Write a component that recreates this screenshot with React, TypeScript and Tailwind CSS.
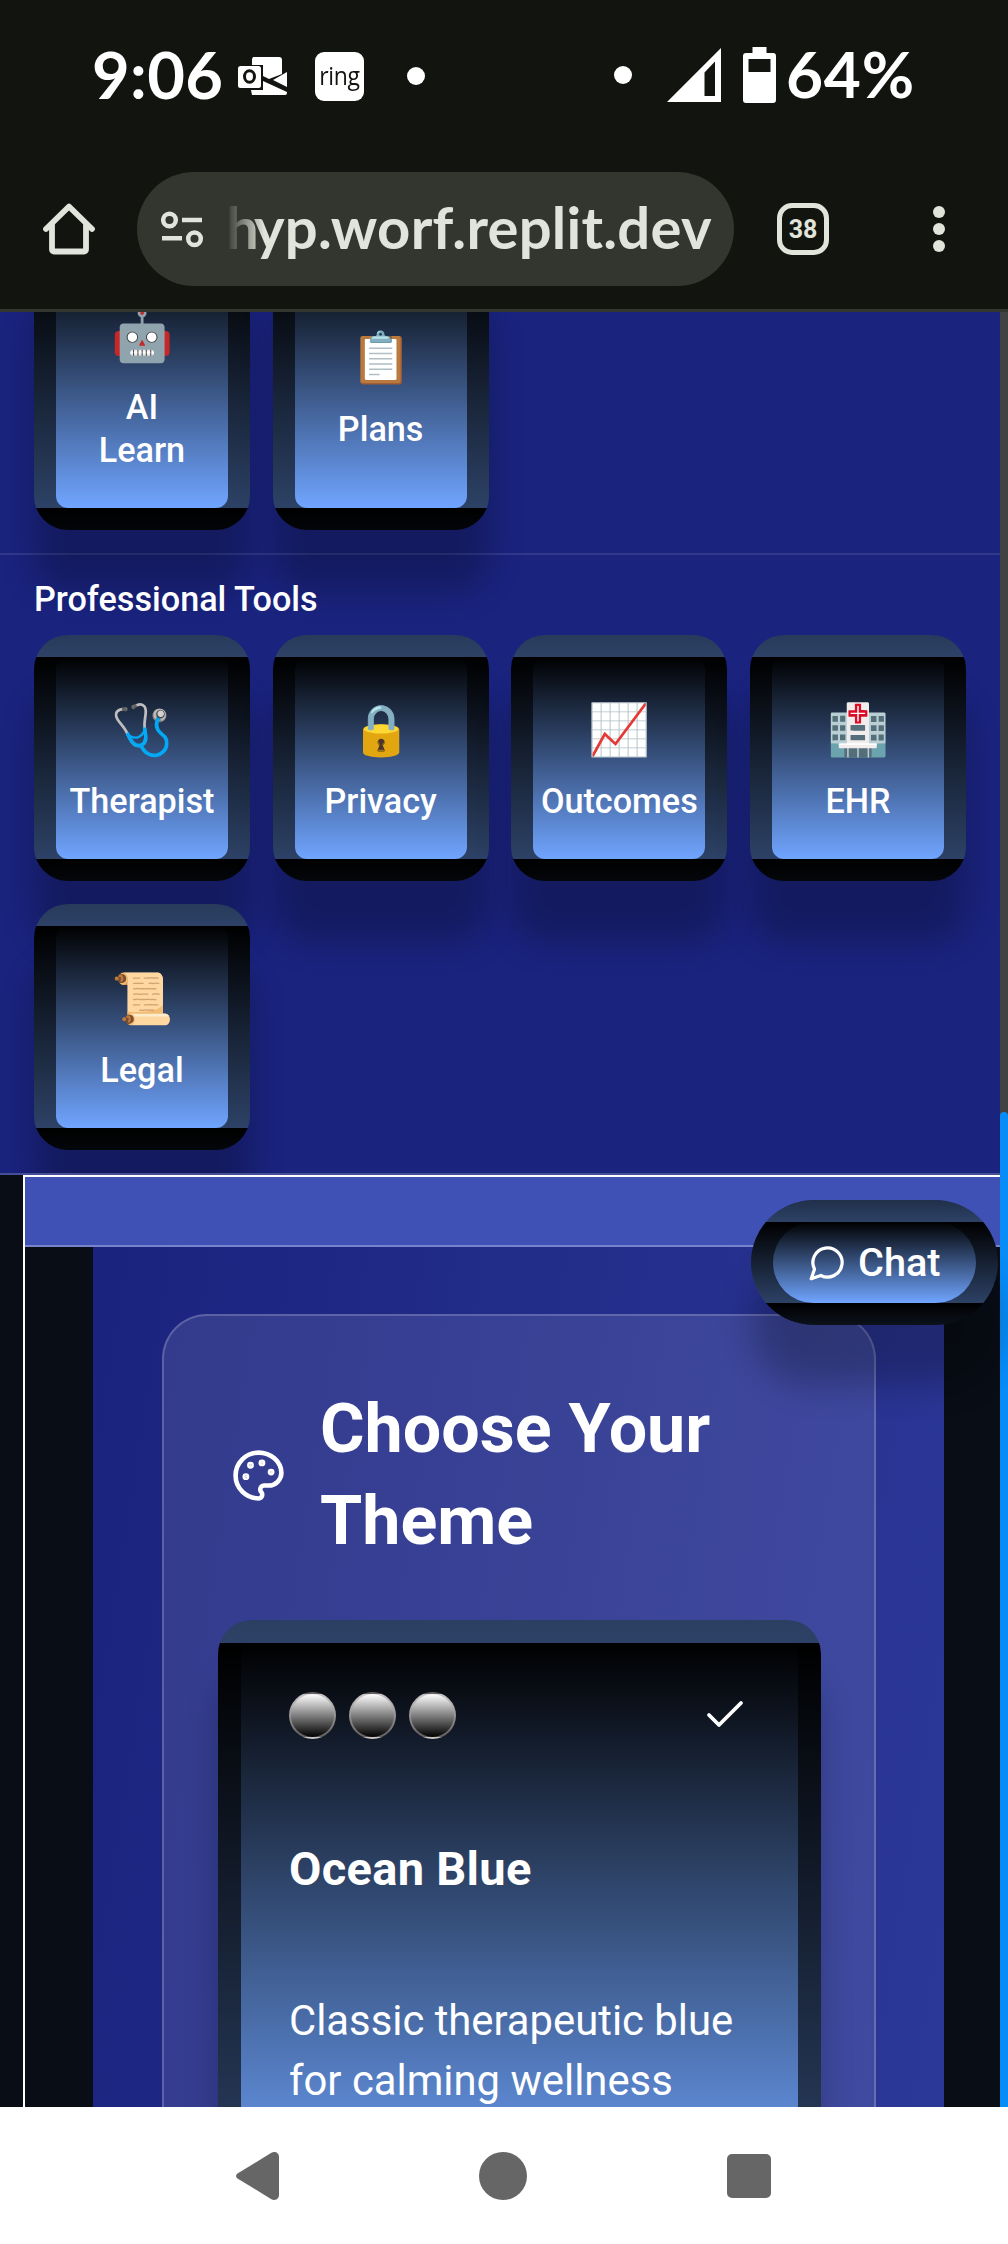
import React from "react";

type Tool = { icon: string; label: string };

const mainTools: Tool[] = [
  { icon: "🤖", label: "AI Learn" },
  { icon: "📋", label: "Plans" },
];

const professionalTools: Tool[] = [
  { icon: "🩺", label: "Therapist" },
  { icon: "🔒", label: "Privacy" },
  { icon: "📈", label: "Outcomes" },
  { icon: "🏥", label: "EHR" },
  { icon: "📜", label: "Legal" },
];

function StatusBar() {
  return (
    <div className="flex h-[150px] items-start text-white">
      <div className="ml-[92px] mt-[36px] w-[133px] whitespace-nowrap font-['Lato'] text-[65px] font-bold leading-[76px] tracking-[0.4px]">9:06</div>
      <svg className="ml-[13px] mt-[57px] h-[38px] w-[49px]" viewBox="0 0 49 38" fill="none">
        <path d="M15 0h26a3 3 0 0 1 3 3v14L31 22l-6-3V8H14V2z" fill="#fff" />
        <path d="M49 15v15L35 23zM13 33h12v-9l24 11v1a2 2 0 0 1-2 2H14z" fill="#fff" />
        <rect x="0" y="9" width="23" height="22" rx="2.500" fill="#fff" />
        <ellipse cx="11.500" cy="19.500" rx="5" ry="5.700" stroke="#12140f" strokeWidth="3" />
      </svg>
      <div className="ml-[28px] mt-[52px] flex h-[49px] w-[49px] items-center justify-center rounded-[9px] bg-white pb-[2px] text-[#12140f]">
        <span className="scale-y-110 font-['Open_Sans'] text-[23px] font-medium leading-none tracking-[-0.3px]">ring</span>
      </div>
      <div className="ml-[43px] mt-[67px] h-[18px] w-[18px] rounded-full bg-white" />
      <div className="ml-[189px] mt-[66px] h-[18px] w-[18px] rounded-full bg-white" />
      <svg className="ml-[35px] mt-[48px] h-[54px] w-[54px]" viewBox="0 0 54 54">
        <path fillRule="evenodd" d="M54 0v54H0zM48 13.500 37.500 24.500V48H48z" fill="#fff" />
      </svg>
      <svg className="ml-[22px] mt-[47px] h-[56px] w-[33px]" viewBox="0 0 33 56">
        <path fillRule="evenodd" d="M9.500 0h14v6H30a3 3 0 0 1 3 3v44a3 3 0 0 1-3 3H3a3 3 0 0 1-3-3V9a3 3 0 0 1 3-3h6.500zM5.500 12v13h22V12z" fill="#fff" />
      </svg>
      <div className="ml-[10px] mt-[36px] whitespace-nowrap font-['Lato'] text-[64px] font-bold leading-[76px] tracking-[0.7px]">64%</div>
    </div>
  );
}

function Toolbar() {
  return (
    <div className="flex h-[162px] items-start border-b-[3px] border-[#33362f] text-[#e1e4da]">
      <svg className="ml-[43px] mt-[53px] h-[52px] w-[52px]" viewBox="0 0 52 52" fill="none" stroke="currentColor" strokeWidth="5.800" strokeLinejoin="round" strokeLinecap="round">
        <path d="M9 22v24.500a2 2 0 0 0 2 2h30a2 2 0 0 0 2-2V22" />
        <path d="M3 26 26 3.500 49 26" />
      </svg>
      <div className="ml-[42px] mt-[22px] flex h-[114px] w-[597px] overflow-hidden rounded-full bg-[#33362f]">
        <svg className="ml-[24px] mt-[38px] h-[38px] w-[43px] shrink-0" viewBox="0 0 43 38" fill="none" stroke="currentColor" strokeWidth="4.500">
          <circle cx="8.500" cy="10" r="6.300" />
          <path d="M21 10h20M1 28.300h20" />
          <circle cx="33.500" cy="28.700" r="6.300" />
        </svg>
        <div className="ml-[22px] flex h-[114px] w-[494px] overflow-hidden [mask-image:linear-gradient(to_right,transparent_0px,black_38px)]">
          <span className="mt-[17px] whitespace-nowrap font-['Lato'] text-[58px] font-bold leading-[76px] tracking-[0.25px]">
            <span className="mr-[-5px]">h</span>yp.worf.replit.dev
          </span>
        </div>
      </div>
      <div className="ml-[43px] mt-[53px] flex h-[52px] w-[52px] items-center justify-center rounded-[15px] border-[5.5px] border-[#e1e4da] text-[25px] font-bold leading-none">38</div>
      <div className="ml-[104px] mt-[56px] flex flex-col gap-[5px]">
        <i className="h-3 w-3 rounded-full bg-[#e1e4da]" />
        <i className="h-3 w-3 rounded-full bg-[#e1e4da]" />
        <i className="h-3 w-3 rounded-full bg-[#e1e4da]" />
      </div>
    </div>
  );
}

function ToolCard({ icon, label, tall = false }: Tool & { tall?: boolean }) {
  return (
    <button
      className={`${tall ? "h-[289px]" : "h-[246px]"} flex flex-col items-center justify-center rounded-[34px] border-[22px] border-black/60 bg-[linear-gradient(to_bottom,#000,#70a5ff)] text-white shadow-[0_60px_34px_rgba(0,0,0,0.24)]`}
    >
      <span className="mt-[5px] flex h-[64px] items-center whitespace-nowrap text-[50px] leading-[64px]">{icon}</span>
      <span className="mt-[18px] flex justify-center text-center text-[34.2px] font-medium leading-[43px]">
        <span className={label === "AI Learn" ? "w-[100px]" : ""}>{label}</span>
      </span>
    </button>
  );
}

function ThemeCard() {
  return (
    <div className="ml-[54px] mt-[53px] h-[619px] w-[603px] rounded-[34px] border-[23px] border-black/60 bg-[linear-gradient(to_bottom,#000,#70a5ff)] pl-[48px] pr-[49px] shadow-[0_60px_34px_rgba(0,0,0,0.2)]">
      <div className="mt-[48px] flex h-[48px] items-center gap-[13px]">
        {[0, 1, 2].map((n) => (
          <i key={n} className="h-[47px] w-[47px] rounded-full border-2 border-[#a8a0a0]/60 bg-[linear-gradient(to_bottom,#fff,#000)]" />
        ))}
        <svg className="ml-auto h-[48px] w-[48px]" viewBox="0 0 24 24" fill="none" stroke="#fff" strokeWidth="1.900" strokeLinecap="round" strokeLinejoin="round">
          <path d="M20 6 9 17l-5-5" />
        </svg>
      </div>
      <h3 className="mt-[98px] whitespace-nowrap text-[47px] font-bold leading-[64px] tracking-[0.3px]">Ocean Blue</h3>
      <p className="mt-[90px] whitespace-nowrap text-[41.8px] leading-[60px]">
        Classic therapeutic blue
        <br />
        for calming wellness
      </p>
    </div>
  );
}

function SettingsPanel() {
  return (
    <div className="bg-[#080d16] pl-[23px]">
      <div className="h-[932px] border-l-2 border-t-2 border-white">
        <div className="h-[70px] border-b-2 border-[#7783cb] bg-[#3f51b5]" />
        <div className="ml-[68px] h-[1200px] w-[851px] bg-[linear-gradient(99deg,#1a237e,#2d3999)] px-[69px] pt-[67px]">
          <section className="h-[1100px] w-[714px] rounded-[45px] border-2 border-white/20 bg-white/10 text-white">
            <div className="flex items-center pl-[67px] pt-[67px]">
              <svg className="h-[55px] w-[55px] shrink-0" viewBox="0 0 24 24" fill="none" stroke="currentColor" strokeWidth="2" strokeLinecap="round" strokeLinejoin="round">
                <circle cx="13.500" cy="6.500" r=".5" fill="currentColor" />
                <circle cx="17.500" cy="10.500" r=".5" fill="currentColor" />
                <circle cx="8.500" cy="7.500" r=".5" fill="currentColor" />
                <circle cx="6.500" cy="12.500" r=".5" fill="currentColor" />
                <path d="M12 2C6.500 2 2 6.500 2 12s4.500 10 10 10c.926 0 1.648-.746 1.648-1.688 0-.437-.18-.835-.437-1.125-.29-.289-.438-.652-.438-1.125a1.640 1.640 0 0 1 1.668-1.668h1.996c3.051 0 5.555-2.503 5.555-5.554C21.965 6.012 17.461 2 12 2z" />
              </svg>
              <h2 className="ml-[34px] w-[420px] text-[68.2px] font-bold leading-[92px]">Choose Your Theme</h2>
            </div>
            <ThemeCard />
          </section>
        </div>
      </div>
    </div>
  );
}

function ChatButton() {
  return (
    <button className="absolute left-[751px] top-[888px] flex h-[125px] w-[247px] items-center rounded-full border-[22px] border-black/60 bg-[linear-gradient(to_bottom,#000,#70a5ff)] pl-[35px] text-white shadow-[0_60px_34px_rgba(0,0,0,0.24)]">
      <svg className="h-[39px] w-[39px]" viewBox="0 0 24 24" fill="none" stroke="currentColor" strokeWidth="2" strokeLinecap="round" strokeLinejoin="round">
        <path d="M7.900 20A9 9 0 1 0 4 16.100L2 22Z" />
      </svg>
      <span className="ml-[11px] text-[39.7px] font-medium leading-[48px]">Chat</span>
    </button>
  );
}

function NavBar() {
  return (
    <nav className="flex h-[137px] items-center bg-white text-[#666]">
      <svg className="ml-[236px] h-[48px] w-[43px]" viewBox="0 0 43 48" fill="currentColor">
        <path d="M1.500 21.500 35 1c4-2.400 8 0 8 4v38c0 4-4 6.400-8 4L1.500 26.500c-2-1.500-2-3.500 0-5z" />
      </svg>
      <i className="ml-[200px] h-[48px] w-[48px] rounded-full bg-[#666]" />
      <i className="ml-[200px] h-[44px] w-[44px] rounded-[5px] bg-[#666]" />
    </nav>
  );
}

export default function App() {
  return (
    <div className="flex h-[2244px] w-[1008px] flex-col overflow-hidden bg-white font-['Roboto',sans-serif]">
      <header className="h-[312px] shrink-0 bg-[#12140f]">
        <StatusBar />
        <Toolbar />
      </header>
      <main className="relative flex h-[1795px] shrink-0 overflow-hidden">
        <div className="w-[1000px] shrink-0">
          <div className="h-[863px] overflow-hidden border-b-2 border-[#464e96] bg-[#1a237e]">
            <div className="mt-[-71px] grid h-[314px] grid-cols-4 content-start gap-[22.67px] border-b-2 border-white/10 px-[34px]">
              {mainTools.map((t) => (
                <ToolCard key={t.label} {...t} tall />
              ))}
            </div>
            <h2 className="mt-[23px] whitespace-nowrap pl-[34px] text-[34.2px] font-medium leading-[43px] text-white">Professional Tools</h2>
            <div className="mt-[14px] grid grid-cols-4 gap-x-[22.67px] gap-y-[23px] px-[34px]">
              {professionalTools.map((t) => (
                <ToolCard key={t.label} {...t} />
              ))}
            </div>
          </div>
          <SettingsPanel />
        </div>
        <div className="w-2 shrink-0 bg-[#424242] pt-[800px]">
          <div className="h-[1100px] rounded-t-full bg-[#078cf8]" />
        </div>
        <ChatButton />
      </main>
      <NavBar />
    </div>
  );
}
